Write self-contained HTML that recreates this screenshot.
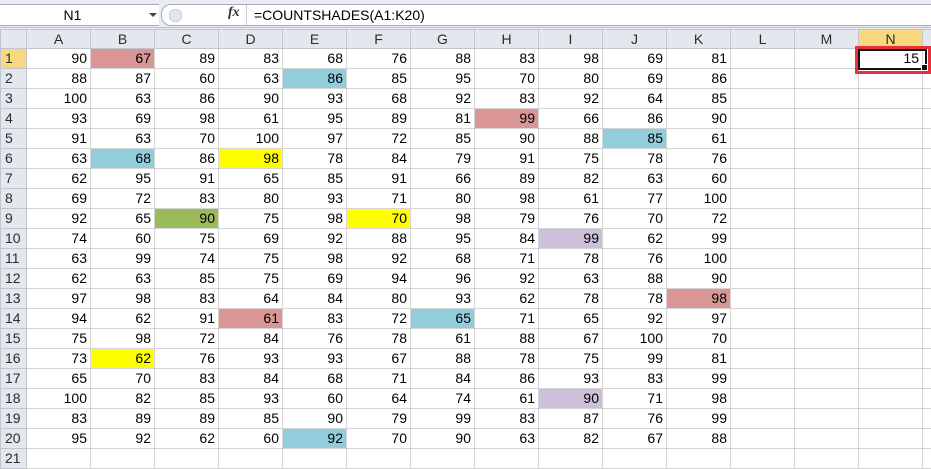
<!DOCTYPE html>
<html><head><style>
body{margin:0;width:931px;height:453px;overflow:hidden;background:#fff;font-family:"Liberation Sans",sans-serif;position:relative}
.fb{position:absolute;left:0;top:0;width:931px;height:30px;background:#e9edf2}
.nb{position:absolute;left:0;top:4px;width:159px;height:20px;background:#fff;border-top:1px solid #a5acb5;border-bottom:1px solid #a5acb5;font-size:14px;text-align:center;line-height:20px}
.nb span{position:absolute;left:0;width:145px}
.arr{position:absolute;left:149px;top:13px;width:0;height:0;border-left:4px solid transparent;border-right:4px solid transparent;border-top:4px solid #444}
.btn{position:absolute;left:161px;top:4px;width:84px;height:20px;background:#fff;border:1px solid #a5acb5;border-radius:10px 0 0 10px}
.circ{position:absolute;left:7px;top:4px;width:11px;height:11px;border-radius:6px;background:#e3e6ea;border:1px solid #ccc}
.fx{position:absolute;left:228px;top:5px;font-family:"Liberation Serif",serif;font-style:italic;font-weight:bold;font-size:14px;color:#333}
.fm{position:absolute;left:246px;top:4px;right:0;height:20px;background:#fff;border-top:1px solid #a5acb5;border-bottom:1px solid #a5acb5;border-left:1px solid #c8ccd2;font-size:14px;line-height:20px;padding-left:7px}
.line{position:absolute;left:0;top:27px;width:931px;height:1px;background:#b9c1cc}
table{position:absolute;left:0;top:29px;border-collapse:collapse;table-layout:fixed;font-size:14px;width:931px}
td{border:1px solid #d4d4d4;height:19px;padding:0 3px 0 0;text-align:right;overflow:hidden;white-space:nowrap;line-height:19px}
th{font-weight:normal;background:#e4e8ee;border:1px solid #c0c6ce;color:#2b2b2b;height:18px;font-size:14px;padding:0}
td.h{background:#e4e8ee;border:1px solid #c0c6ce;text-align:left;padding-left:4px;color:#2b2b2b}
.p{background:#da9694}.b{background:#92cddc}.y{background:#ffff00}.g{background:#9bbb59}.l{background:#ccc0da}
.sel{background:#f9d77e !important}
.red{position:absolute;left:855px;top:46px;width:70px;height:22px;border:3px solid #e8303a}
.blk{position:absolute;left:858px;top:49px;width:65px;height:17px;border:2px solid #111}
.dot{position:absolute;left:921px;top:64px;width:5px;height:5px;background:#111;border:1px solid #fff}
</style></head><body>
<div class="fb"></div>
<div class="nb"><span>N1</span></div><div class="arr"></div>
<div class="btn"><div class="circ"></div></div>
<div class="fx">fx</div>
<div class="fm">=COUNTSHADES(A1:K20)</div>
<div class="line"></div>
<table>
<colgroup><col style="width:26px"><col style="width:64px"><col style="width:64px"><col style="width:64px"><col style="width:64px"><col style="width:64px"><col style="width:64px"><col style="width:64px"><col style="width:64px"><col style="width:64px"><col style="width:64px"><col style="width:64px"><col style="width:64px"><col style="width:64px"><col style="width:64px"><col style="width:9px"></colgroup>
<tr><th></th><th>A</th><th>B</th><th>C</th><th>D</th><th>E</th><th>F</th><th>G</th><th>H</th><th>I</th><th>J</th><th>K</th><th>L</th><th>M</th><th class="sel">N</th><th></th></tr>
<tr><td class="h sel">1</td><td>90</td><td class="p">67</td><td>89</td><td>83</td><td>68</td><td>76</td><td>88</td><td>83</td><td>98</td><td>69</td><td>81</td><td></td><td></td><td>15</td><td></td></tr>
<tr><td class="h">2</td><td>88</td><td>87</td><td>60</td><td>63</td><td class="b">86</td><td>85</td><td>95</td><td>70</td><td>80</td><td>69</td><td>86</td><td></td><td></td><td></td><td></td></tr>
<tr><td class="h">3</td><td>100</td><td>63</td><td>86</td><td>90</td><td>93</td><td>68</td><td>92</td><td>83</td><td>92</td><td>64</td><td>85</td><td></td><td></td><td></td><td></td></tr>
<tr><td class="h">4</td><td>93</td><td>69</td><td>98</td><td>61</td><td>95</td><td>89</td><td>81</td><td class="p">99</td><td>66</td><td>86</td><td>90</td><td></td><td></td><td></td><td></td></tr>
<tr><td class="h">5</td><td>91</td><td>63</td><td>70</td><td>100</td><td>97</td><td>72</td><td>85</td><td>90</td><td>88</td><td class="b">85</td><td>61</td><td></td><td></td><td></td><td></td></tr>
<tr><td class="h">6</td><td>63</td><td class="b">68</td><td>86</td><td class="y">98</td><td>78</td><td>84</td><td>79</td><td>91</td><td>75</td><td>78</td><td>76</td><td></td><td></td><td></td><td></td></tr>
<tr><td class="h">7</td><td>62</td><td>95</td><td>91</td><td>65</td><td>85</td><td>91</td><td>66</td><td>89</td><td>82</td><td>63</td><td>60</td><td></td><td></td><td></td><td></td></tr>
<tr><td class="h">8</td><td>69</td><td>72</td><td>83</td><td>80</td><td>93</td><td>71</td><td>80</td><td>98</td><td>61</td><td>77</td><td>100</td><td></td><td></td><td></td><td></td></tr>
<tr><td class="h">9</td><td>92</td><td>65</td><td class="g">90</td><td>75</td><td>98</td><td class="y">70</td><td>98</td><td>79</td><td>76</td><td>70</td><td>72</td><td></td><td></td><td></td><td></td></tr>
<tr><td class="h">10</td><td>74</td><td>60</td><td>75</td><td>69</td><td>92</td><td>88</td><td>95</td><td>84</td><td class="l">99</td><td>62</td><td>99</td><td></td><td></td><td></td><td></td></tr>
<tr><td class="h">11</td><td>63</td><td>99</td><td>74</td><td>75</td><td>98</td><td>92</td><td>68</td><td>71</td><td>78</td><td>76</td><td>100</td><td></td><td></td><td></td><td></td></tr>
<tr><td class="h">12</td><td>62</td><td>63</td><td>85</td><td>75</td><td>69</td><td>94</td><td>96</td><td>92</td><td>63</td><td>88</td><td>90</td><td></td><td></td><td></td><td></td></tr>
<tr><td class="h">13</td><td>97</td><td>98</td><td>83</td><td>64</td><td>84</td><td>80</td><td>93</td><td>62</td><td>78</td><td>78</td><td class="p">98</td><td></td><td></td><td></td><td></td></tr>
<tr><td class="h">14</td><td>94</td><td>62</td><td>91</td><td class="p">61</td><td>83</td><td>72</td><td class="b">65</td><td>71</td><td>65</td><td>92</td><td>97</td><td></td><td></td><td></td><td></td></tr>
<tr><td class="h">15</td><td>75</td><td>98</td><td>72</td><td>84</td><td>76</td><td>78</td><td>61</td><td>88</td><td>67</td><td>100</td><td>70</td><td></td><td></td><td></td><td></td></tr>
<tr><td class="h">16</td><td>73</td><td class="y">62</td><td>76</td><td>93</td><td>93</td><td>67</td><td>88</td><td>78</td><td>75</td><td>99</td><td>81</td><td></td><td></td><td></td><td></td></tr>
<tr><td class="h">17</td><td>65</td><td>70</td><td>83</td><td>84</td><td>68</td><td>71</td><td>84</td><td>86</td><td>93</td><td>83</td><td>99</td><td></td><td></td><td></td><td></td></tr>
<tr><td class="h">18</td><td>100</td><td>82</td><td>85</td><td>93</td><td>60</td><td>64</td><td>74</td><td>61</td><td class="l">90</td><td>71</td><td>98</td><td></td><td></td><td></td><td></td></tr>
<tr><td class="h">19</td><td>83</td><td>89</td><td>89</td><td>85</td><td>90</td><td>79</td><td>99</td><td>83</td><td>87</td><td>76</td><td>99</td><td></td><td></td><td></td><td></td></tr>
<tr><td class="h">20</td><td>95</td><td>92</td><td>62</td><td>60</td><td class="b">92</td><td>70</td><td>90</td><td>63</td><td>82</td><td>67</td><td>88</td><td></td><td></td><td></td><td></td></tr>
<tr><td class="h">21</td><td></td><td></td><td></td><td></td><td></td><td></td><td></td><td></td><td></td><td></td><td></td><td></td><td></td><td></td><td></td></tr>
</table>
<div class="red"></div><div class="blk"></div><div class="dot"></div>
</body></html>
